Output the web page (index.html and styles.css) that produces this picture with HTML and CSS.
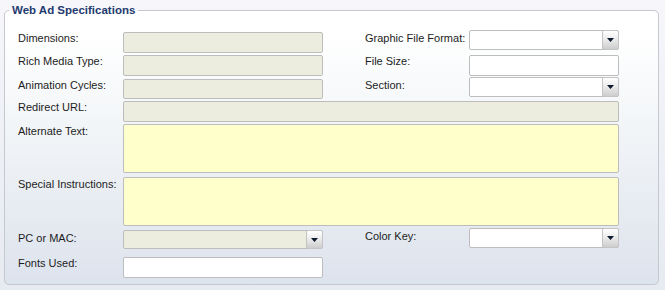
FILE: index.html
```html
<!DOCTYPE html>
<html lang="en">
<head>
    <meta charset="UTF-8">
    <title>Web Ad Specifications</title>
    <link rel="stylesheet" href="styles.css">
</head>
<body>
    <fieldset class="specs">
        <legend>Web Ad Specifications</legend>

        <div class="row r1">
            <label class="lbl">Dimensions:</label>
            <div class="field off"></div>
            <label class="lbl right">Graphic File Format:</label>
            <div class="select small up">
                <span class="drop"><svg width="7" height="4" viewBox="0 0 7 4"><path d="M0 0h7L3.5 4z" fill="#0d1a2e"/></svg></span>
            </div>
        </div>

        <div class="row r2">
            <label class="lbl">Rich Media Type:</label>
            <div class="field off"></div>
            <label class="lbl right">File Size:</label>
            <div class="field small"></div>
        </div>

        <div class="row r3">
            <label class="lbl">Animation Cycles:</label>
            <div class="field off short"></div>
            <label class="lbl right">Section:</label>
            <div class="select small up">
                <span class="drop"><svg width="7" height="4" viewBox="0 0 7 4"><path d="M0 0h7L3.5 4z" fill="#0d1a2e"/></svg></span>
            </div>
        </div>

        <div class="row r4">
            <label class="lbl">Redirect URL:</label>
            <div class="field off wide"></div>
        </div>

        <div class="row r5">
            <label class="lbl tall">Alternate Text:</label>
            <div class="field note wide"></div>
        </div>

        <div class="row r6">
            <label class="lbl tall">Special Instructions:</label>
            <div class="field note wide"></div>
        </div>

        <div class="row r7">
            <label class="lbl mid">PC or MAC:</label>
            <div class="select off">
                <span class="drop"><svg width="7" height="4" viewBox="0 0 7 4"><path d="M0 0h7L3.5 4z" fill="#0d1a2e"/></svg></span>
            </div>
            <label class="lbl right">Color Key:</label>
            <div class="select small up">
                <span class="drop"><svg width="7" height="4" viewBox="0 0 7 4"><path d="M0 0h7L3.5 4z" fill="#0d1a2e"/></svg></span>
            </div>
        </div>

        <div class="row r8">
            <label class="lbl">Fonts Used:</label>
            <div class="field"></div>
        </div>
    </fieldset>
</body>
</html>
```

FILE: styles.css
```css
body {
    margin: 0;
    width: 665px;
    height: 290px;
    overflow: hidden;
    font-family: 'Liberation Sans', Arial, sans-serif;
    font-size: 11px;
    color: #1c1c1c;
    background: linear-gradient(#f6f6fb, #e6eaf1);
}

.specs {
    box-sizing: border-box;
    width: 655px;
    height: 282px;
    margin: 3px 0 0 4px;
    padding: 15px 0 0 13px;
    border: 1px solid #c5c8cc;
    border-radius: 5px;
    background: linear-gradient(#ffffff 8%, #f3f6f8 40%, #dde3ed 100%);
}

.specs legend {
    margin-left: -9px;
    padding: 0 3px;
    font-size: 11.5px;
    font-weight: bold;
    line-height: 14px;
    color: #1e3a6e;
}

/* строки формы */
.row {
    display: flex;
    align-items: flex-start;
}

.r1 { height: 23px; }
.r2 { height: 24px; }
.r3 { height: 22px; }
.r4 { height: 23px; }
.r5 { height: 53px; }
.r6 { height: 53px; }
.r7 { height: 27px; }
.r8 { height: 20px; }

.lbl {
    width: 105px;
    padding-top: 0;
    line-height: 12px;
    white-space: nowrap;
}

.lbl.tall { padding-top: 1px; }
.lbl.mid { padding-top: 2px; }

.lbl.right {
    width: 104px;
    margin-left: 42px;
}

.field,
.select {
    box-sizing: border-box;
    position: relative;
    width: 200px;
    height: 21px;
    border: 1px solid #bdbdbd;
    border-radius: 2px;
    background: #ffffff;
}

.field.off,
.select.off { background: #ecedde; }

.field.short { height: 20px; }

.field.wide { width: 496px; }

.field.note {
    height: 49px;
    background: #ffffcc;
}

.select { height: 19px; }

.small { width: 150px; }

.select.small { height: 20px; }
.up { margin-top: -2px; }

.drop {
    position: absolute;
    top: 0;
    right: 0;
    bottom: 0;
    width: 15px;
    display: flex;
    align-items: center;
    justify-content: center;
    border: 1px solid #c4c4c4;
    border-radius: 2px;
    margin: -1px -1px -1px 0;
    background: linear-gradient(#ffffff, #ececec 45%, #cdcdcd);
}
```
